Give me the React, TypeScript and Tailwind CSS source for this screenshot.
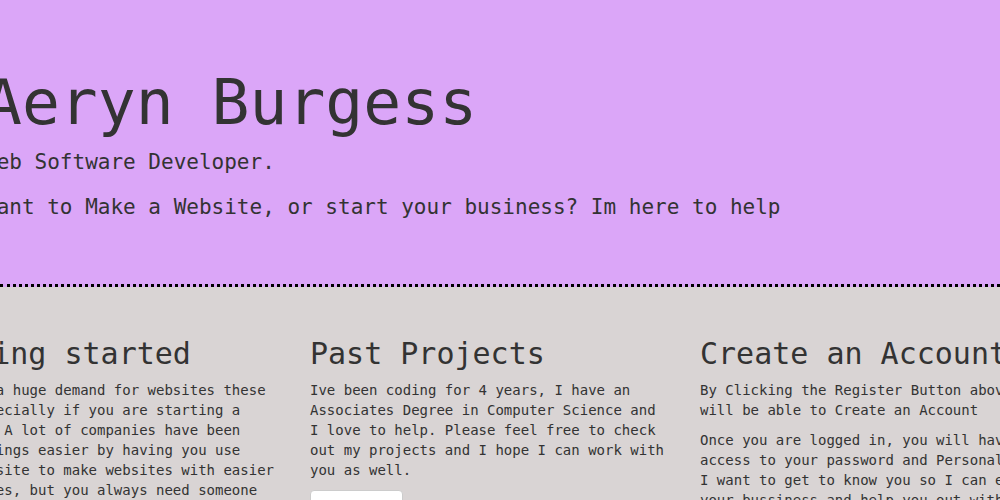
export default function App() {
  const mono = { fontFamily: '"DejaVu Sans Mono", monospace' }

  return (
    <div className="w-full min-h-[500px] overflow-hidden bg-[#d9d4d4] text-[#333]" style={mono}>
      <div className="bg-[#dba6f8] border-b-[3px] border-dotted border-black pt-12 pb-[47px]">
        <div className="ml-[-16px]">
          <h1 className="mt-5 mb-2.5 text-[63px] leading-[1.1] whitespace-nowrap">Aeryn Burgess</h1>
          <p className="mb-[15px] text-[21px] leading-[30px] whitespace-nowrap">Web Software Developer.</p>
          <p className="mb-[15px] text-[21px] leading-[30px] whitespace-nowrap">
            Want to Make a Website, or start your business? Im here to help
          </p>
        </div>
      </div>

      <div className="ml-[-95px] w-[1170px] px-[15px] pt-[30px] pb-10">
        <div className="grid grid-cols-3 -mx-[15px]">
          <div className="px-[15px]">
            <h2 className="mt-5 mb-2.5 text-[30px] leading-[1.1]">Getting started</h2>
            <p className="mb-2.5 text-[14px] leading-[20px]">
              There is a huge demand for websites these days, especially if you are starting a
              business. A lot of companies have been making things easier by having you use their
              website to make websites with easier experiences, but you always need someone to
              build it the way you want.
            </p>
          </div>
          <div className="px-[15px]">
            <h2 className="mt-5 mb-2.5 text-[30px] leading-[1.1]">Past Projects</h2>
            <p className="mb-2.5 text-[14px] leading-[20px]">
              Ive been coding for 4 years, I have an Associates Degree in Computer Science and I
              love to help. Please feel free to check out my projects and I hope I can work with
              you as well.
            </p>
            <button className="bg-white border border-[#ccc] rounded px-3 py-1.5 text-[14px] leading-[20px] text-[#333]">
              Projects
            </button>
          </div>
          <div className="px-[15px]">
            <h2 className="mt-5 mb-2.5 text-[30px] leading-[1.1] whitespace-nowrap">Create an Account</h2>
            <p className="mb-2.5 text-[14px] leading-[20px]">
              By Clicking the Register Button above you will be able to Create an Account
            </p>
            <p className="mb-2.5 text-[14px] leading-[20px]">
              Once you are logged in, you will have access to your password and Personal Info. I
              want to get to know you so I can expand your bussiness and help you out with your
              website.
            </p>
          </div>
        </div>
      </div>
    </div>
  )
}
